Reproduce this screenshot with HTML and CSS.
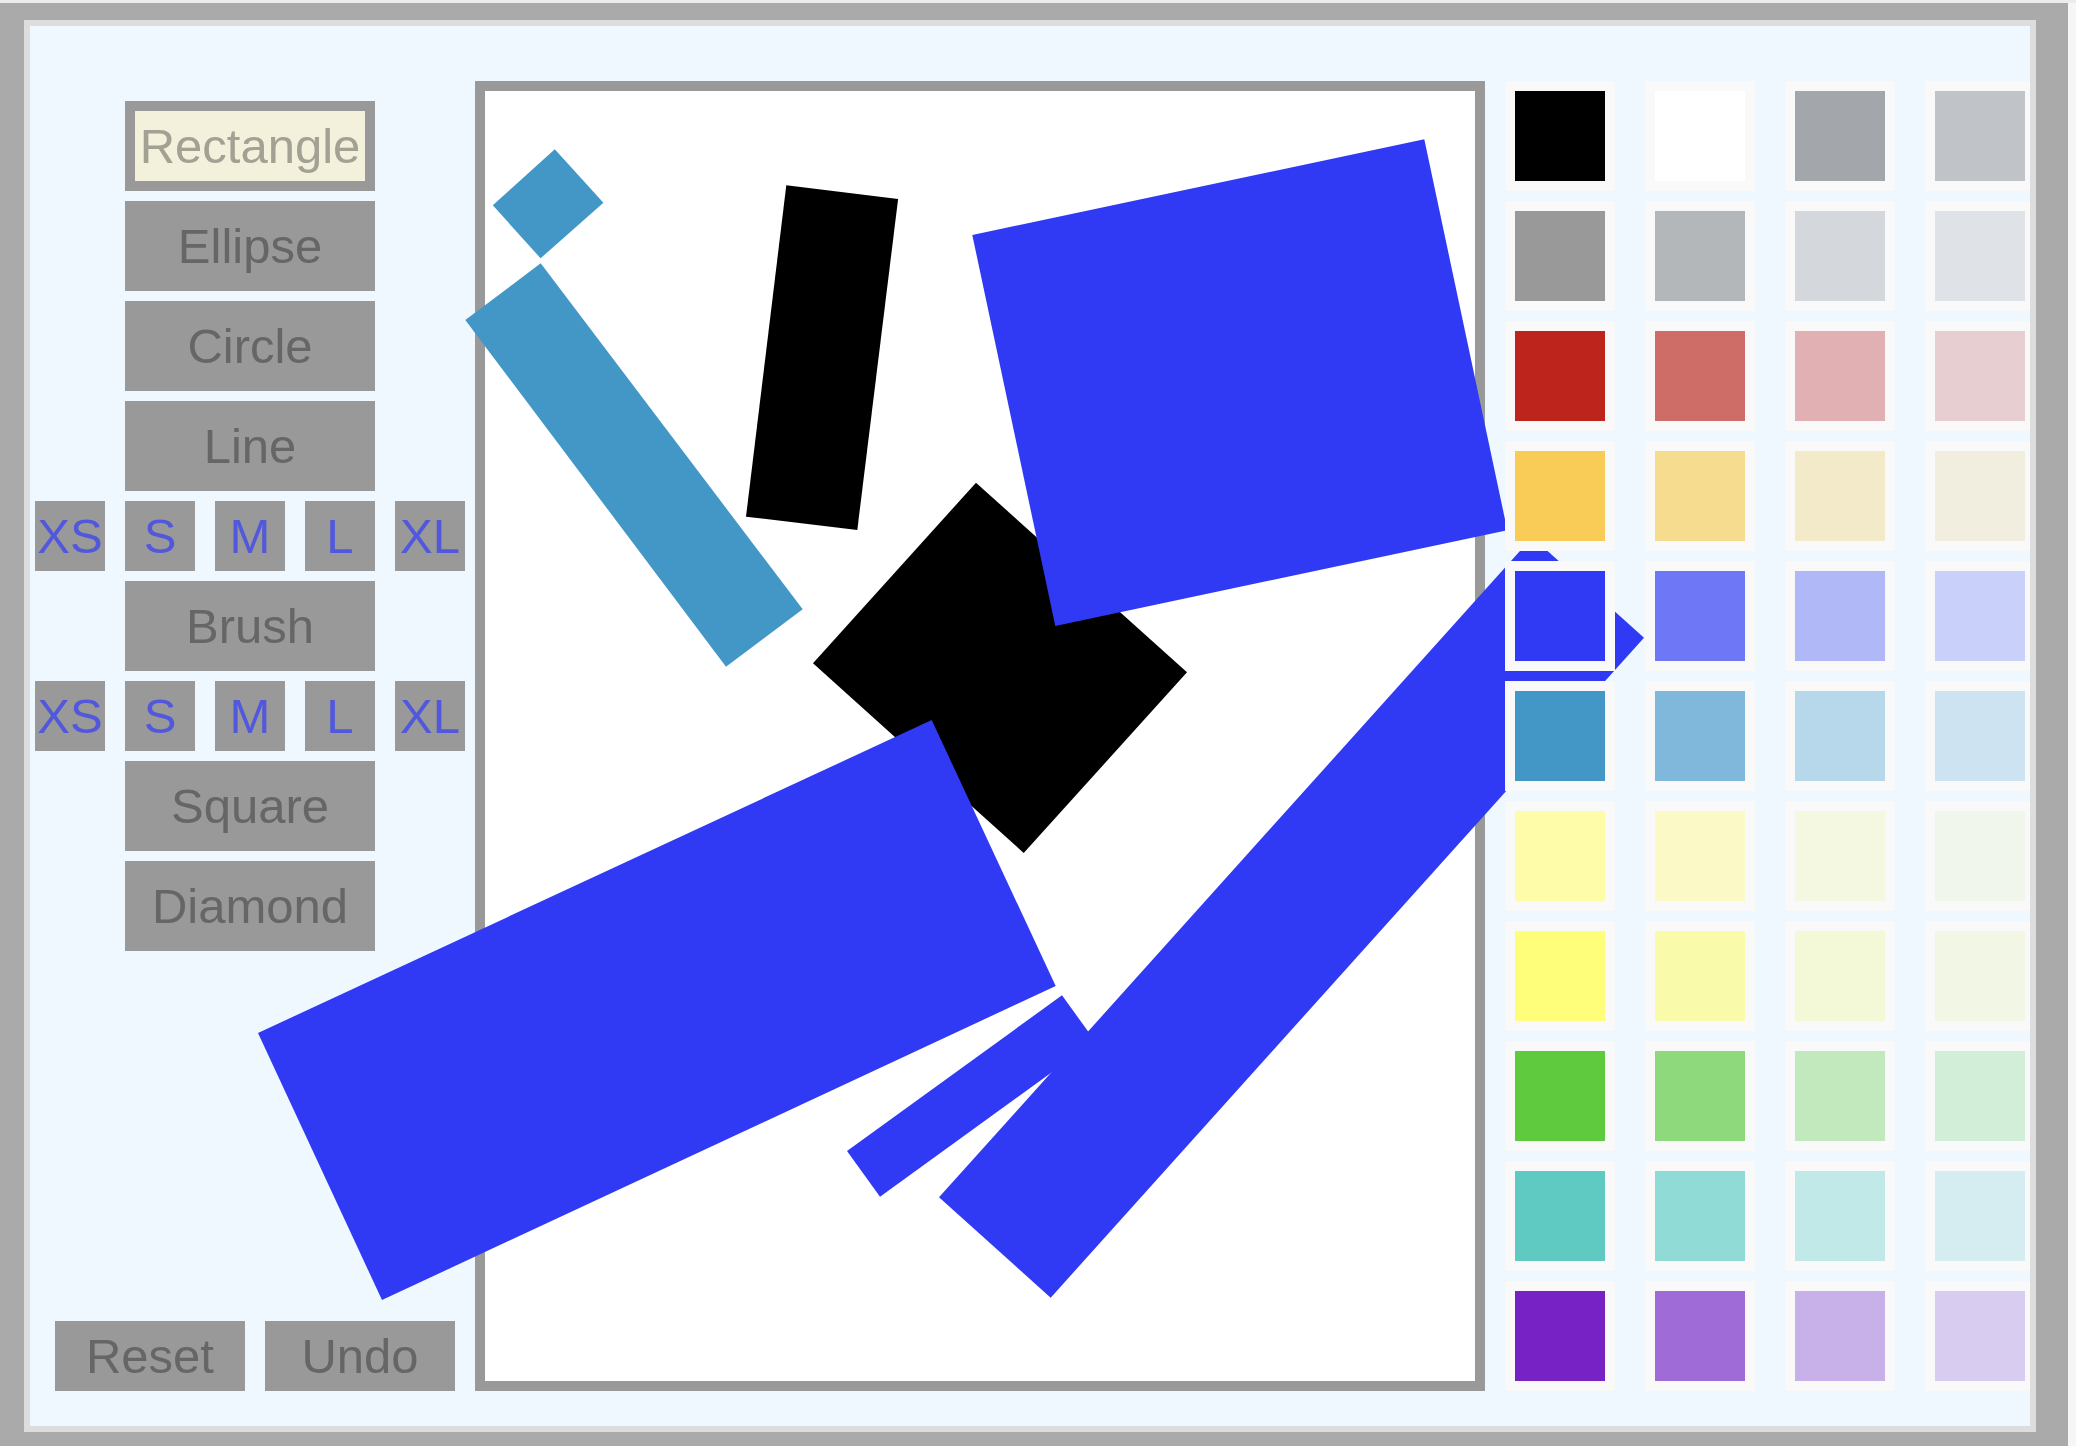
FILE: index.html
```html
<!DOCTYPE html>
<html>
<head>
<meta charset="utf-8">
<link rel="stylesheet" href="styles.css">
</head>
<body>
<div class="app">
  <div class="tools">
    <div class="btn tool active">Rectangle</div>
    <div class="btn tool">Ellipse</div>
    <div class="btn tool">Circle</div>
    <div class="btn tool">Line</div>
    <div class="sizes">
      <div class="btn size">XS</div><div class="btn size">S</div><div class="btn size">M</div><div class="btn size">L</div><div class="btn size">XL</div>
    </div>
    <div class="btn tool">Brush</div>
    <div class="sizes">
      <div class="btn size">XS</div><div class="btn size">S</div><div class="btn size">M</div><div class="btn size">L</div><div class="btn size">XL</div>
    </div>
    <div class="btn tool">Square</div>
    <div class="btn tool">Diamond</div>
    <div class="actions">
      <div class="btn action">Reset</div>
      <div class="btn action">Undo</div>
    </div>
  </div>
  <div class="canvas"></div>
  <div class="palette">
    <div class="cell"><div class="sw" style="background:#000000"></div></div>
    <div class="cell"><div class="sw" style="background:#ffffff"></div></div>
    <div class="cell"><div class="sw" style="background:#a3a6ab"></div></div>
    <div class="cell"><div class="sw" style="background:#c0c4c8"></div></div>
    <div class="cell"><div class="sw" style="background:#999999"></div></div>
    <div class="cell"><div class="sw" style="background:#b4b7ba"></div></div>
    <div class="cell"><div class="sw" style="background:#d4d7dc"></div></div>
    <div class="cell"><div class="sw" style="background:#dfe3e7"></div></div>
    <div class="cell"><div class="sw" style="background:#bd241b"></div></div>
    <div class="cell"><div class="sw" style="background:#ce6c67"></div></div>
    <div class="cell"><div class="sw" style="background:#e0b0b3"></div></div>
    <div class="cell"><div class="sw" style="background:#e6ced1"></div></div>
    <div class="cell"><div class="sw" style="background:#f8cc56"></div></div>
    <div class="cell"><div class="sw" style="background:#f5dc8f"></div></div>
    <div class="cell"><div class="sw" style="background:#f2eac8"></div></div>
    <div class="cell"><div class="sw" style="background:#f1eedf"></div></div>
    <div class="cell"><div class="sw" style="background:#3039f4"></div></div>
    <div class="cell"><div class="sw" style="background:#6e78f6"></div></div>
    <div class="cell"><div class="sw" style="background:#b0b8f7"></div></div>
    <div class="cell"><div class="sw" style="background:#c9d0fa"></div></div>
    <div class="cell"><div class="sw" style="background:#4397c7"></div></div>
    <div class="cell"><div class="sw" style="background:#7fb8da"></div></div>
    <div class="cell"><div class="sw" style="background:#b7d7eb"></div></div>
    <div class="cell"><div class="sw" style="background:#cde3f1"></div></div>
    <div class="cell"><div class="sw" style="background:#fefca8"></div></div>
    <div class="cell"><div class="sw" style="background:#fbfac6"></div></div>
    <div class="cell"><div class="sw" style="background:#f5f8e0"></div></div>
    <div class="cell"><div class="sw" style="background:#f1f6ec"></div></div>
    <div class="cell"><div class="sw" style="background:#fefe7b"></div></div>
    <div class="cell"><div class="sw" style="background:#f9fbaa"></div></div>
    <div class="cell"><div class="sw" style="background:#f3f8d6"></div></div>
    <div class="cell"><div class="sw" style="background:#f1f6e5"></div></div>
    <div class="cell"><div class="sw" style="background:#5fca3d"></div></div>
    <div class="cell"><div class="sw" style="background:#8fd97d"></div></div>
    <div class="cell"><div class="sw" style="background:#c1e9bd"></div></div>
    <div class="cell"><div class="sw" style="background:#d3eed8"></div></div>
    <div class="cell"><div class="sw" style="background:#5ecac1"></div></div>
    <div class="cell"><div class="sw" style="background:#90dbd5"></div></div>
    <div class="cell"><div class="sw" style="background:#c0e9e8"></div></div>
    <div class="cell"><div class="sw" style="background:#d5edf1"></div></div>
    <div class="cell"><div class="sw" style="background:#7722c4"></div></div>
    <div class="cell"><div class="sw" style="background:#9e6bd7"></div></div>
    <div class="cell"><div class="sw" style="background:#c8b0e9"></div></div>
    <div class="cell"><div class="sw" style="background:#d8cdf1"></div></div>
  </div>
  <svg class="shapes" width="2000" height="1400" viewBox="30 26 2000 1400" xmlns="http://www.w3.org/2000/svg">
    <polygon fill="#4397c7" points="492.8,205.3 554.8,149.3 603.4,202.7 540.6,258.3"/>
    <polygon fill="#4397c7" points="540.7,263.3 802.7,609.3 726,666.7 465.3,320"/>
    <polygon fill="#000000" points="786.3,185.3 898.1,199 857.3,530 746,516.7"/>
    <polygon fill="#000000" points="976,482.7 1187,672.3 1023.7,853 813,663.3"/>
    <polygon fill="#3039f4" points="972.3,235 1424.3,139.3 1507.3,530.3 1055.3,626"/>
    <polygon fill="#3039f4" points="258,1033 931.7,720 1055.7,986 382,1300"/>
    <polygon fill="#3039f4" points="847,1151 1062,995.3 1095,1041 880,1196.7"/>
    <polygon fill="#3039f4" points="939,1197.3 1532.3,537.3 1644,637.7 1050.7,1297.7"/>
  </svg>
</div>
<div class="edge"></div>
</body>
</html>
```
FILE: styles.css
```css
html, body {
  margin: 0;
  padding: 0;
}
body {
  background: #aaaaaa;
  border-top: 3px solid #ececec;
  display: flex;
  align-items: flex-start;
  width: 2076px;
  height: 1443px;
  overflow: hidden;
  font-family: "Liberation Sans", Arial, Helvetica, sans-serif;
}
.app {
  position: relative;
  margin: 17px 0 0 24px;
  width: 2000px;
  border: 6px solid #dddddd;
  background: #f0f8ff;
  overflow: hidden;
  display: flex;
  align-items: flex-start;
  padding-top: 55px;
  box-sizing: content-box;
  height: 1345px;
  flex-shrink: 0;
}
.tools {
  width: 440px;
  height: 1310px;
  margin-right: 5px;
  padding-top: 20px;
  box-sizing: border-box;
  display: flex;
  flex-direction: column;
  align-items: center;
  gap: 10px;
  flex-shrink: 0;
}
.btn {
  background: #999999;
  color: #666666;
  font-size: 49px;
  line-height: 1;
  display: flex;
  align-items: center;
  justify-content: center;
  box-sizing: border-box;
  white-space: nowrap;
}
.tool {
  width: 250px;
  height: 90px;
}
.tool.active {
  border: 10px solid #999999;
  background: #f3f0dc;
  color: #a2a193;
}
.sizes {
  display: flex;
  gap: 20px;
}
.size {
  width: 70px;
  height: 70px;
  color: #5258dc;
}
.actions {
  margin-top: auto;
  margin-left: 10px;
  display: flex;
  gap: 20px;
}
.action {
  width: 190px;
  height: 70px;
}
.canvas {
  width: 1010px;
  height: 1310px;
  border: 10px solid #999999;
  background: #ffffff;
  box-sizing: border-box;
  flex-shrink: 0;
}
.palette {
  position: relative;
  z-index: 2;
  margin-left: 20px;
  display: grid;
  grid-template-columns: repeat(4, 110px);
  grid-auto-rows: 110px;
  column-gap: 30px;
  row-gap: 10px;
  flex-shrink: 0;
}
.cell {
  background: #f9f9f9;
  padding: 10px;
}
.sw {
  width: 90px;
  height: 90px;
}
.shapes {
  position: absolute;
  left: 0;
  top: 0;
  z-index: 1;
  overflow: visible;
  pointer-events: none;
}
.edge {
  margin-left: 32px;
  width: 8px;
  height: 1443px;
  background: #f6f6f6;
  flex-shrink: 0;
}
```
